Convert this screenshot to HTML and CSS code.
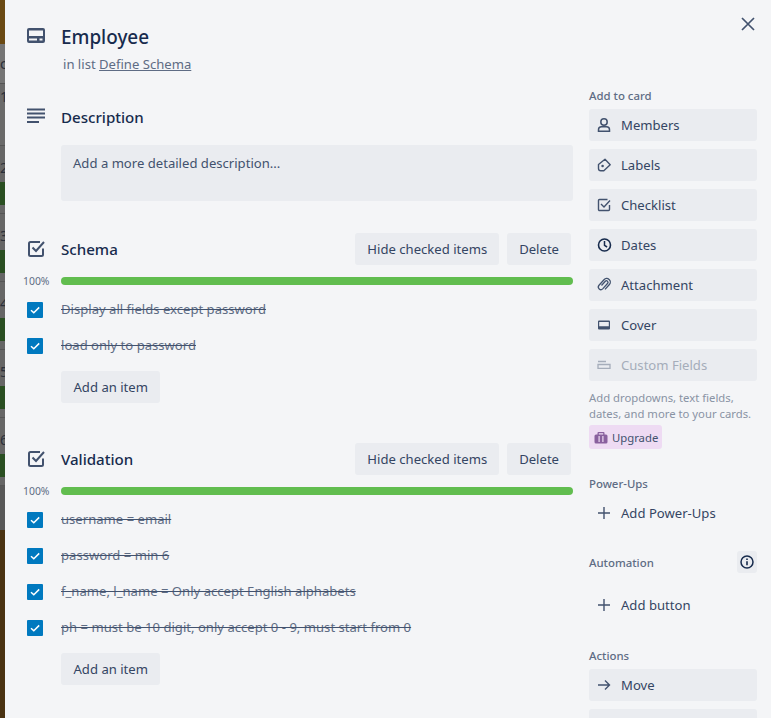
FILE: index.html
```html
<!DOCTYPE html>
<html lang="en">
<head>
  <meta charset="UTF-8">
  <title>Employee</title>
  <link rel="stylesheet" href="styles.css">
</head>
<body>
  <div class="board-strip">
    <div class="strip-top"></div>
    <div class="strip-card s1"><span>c</span></div>
    <div class="strip-card s2"><span>1</span></div>
    <div class="strip-card s3"><span>2</span><i></i></div>
    <div class="strip-card s3"><span>3</span><i></i></div>
    <div class="strip-card s3"><span>4</span><i></i></div>
    <div class="strip-card s3"><span>5</span><i></i></div>
    <div class="strip-card s3"><span>6</span><i></i></div>
    <div class="strip-end"></div>
  </div>

  <div class="modal">
    <svg class="close" width="16" height="16" viewBox="0 0 16 16"><path d="M2 2l12 12M14 2L2 14" fill="none" stroke="#42526e" stroke-width="1.7"/></svg>

    <header class="card-head">
      <svg class="head-icon" width="20" height="20" viewBox="0 0 20 20"><path fill-rule="evenodd" d="M2 1h14a2 2 0 0 1 2 2v11a2 2 0 0 1-2 2H2a2 2 0 0 1-2-2V3a2 2 0 0 1 2-2zm0 2.500V9h14V3.500H2zM2 11.500v2h8v-2H2zm10.500 0v2h3v-2h-3z" fill="#42526e"/></svg>
      <div>
        <h1>Employee</h1>
        <p class="in-list">in list <a href="#">Define Schema</a></p>
      </div>
    </header>

    <div class="columns">
      <main class="main-col">
        <section class="description">
          <div class="section-head">
            <svg class="head-icon" width="20" height="20" viewBox="0 0 20 20"><path d="M0 2.500h18M0 6.500h18M0 10.500h18M0 15h12" stroke="#42526e" stroke-width="1.800" fill="none"/></svg>
            <h2>Description</h2>
          </div>
          <div class="desc-box">Add a more detailed description...</div>
        </section>

        <section class="checklist">
          <div class="section-head">
            <svg class="head-icon" width="20" height="20" viewBox="0 0 20 20"><path d="M16 9.500v6a1.500 1.500 0 0 1-1.500 1.500h-11A1.500 1.500 0 0 1 2 15.500v-11A1.500 1.500 0 0 1 3.500 3H13" fill="none" stroke="#42526e" stroke-width="2"/><path d="M5.500 8.500L9 12l8-9" fill="none" stroke="#42526e" stroke-width="2"/></svg>
            <h2>Schema</h2>
            <div class="head-btns">
              <button class="btn">Hide checked items</button>
              <button class="btn">Delete</button>
            </div>
          </div>
          <div class="progress"><span>100%</span><div class="bar"></div></div>
          <div class="item"><span class="tick"><svg width="16" height="16" viewBox="0 0 16 16"><path d="M4 8.200l2.800 2.600L12.200 5.400" fill="none" stroke="#fff" stroke-width="1.500"/></svg></span><s>Display all fields except password</s></div>
          <div class="item"><span class="tick"><svg width="16" height="16" viewBox="0 0 16 16"><path d="M4 8.200l2.800 2.600L12.200 5.400" fill="none" stroke="#fff" stroke-width="1.500"/></svg></span><s>load only to password</s></div>
          <button class="btn add-item">Add an item</button>
        </section>

        <section class="checklist">
          <div class="section-head">
            <svg class="head-icon" width="20" height="20" viewBox="0 0 20 20"><path d="M16 9.500v6a1.500 1.500 0 0 1-1.500 1.500h-11A1.500 1.500 0 0 1 2 15.500v-11A1.500 1.500 0 0 1 3.500 3H13" fill="none" stroke="#42526e" stroke-width="2"/><path d="M5.500 8.500L9 12l8-9" fill="none" stroke="#42526e" stroke-width="2"/></svg>
            <h2>Validation</h2>
            <div class="head-btns">
              <button class="btn">Hide checked items</button>
              <button class="btn">Delete</button>
            </div>
          </div>
          <div class="progress"><span>100%</span><div class="bar"></div></div>
          <div class="item"><span class="tick"><svg width="16" height="16" viewBox="0 0 16 16"><path d="M4 8.200l2.800 2.600L12.200 5.400" fill="none" stroke="#fff" stroke-width="1.500"/></svg></span><s>username = email</s></div>
          <div class="item"><span class="tick"><svg width="16" height="16" viewBox="0 0 16 16"><path d="M4 8.200l2.800 2.600L12.200 5.400" fill="none" stroke="#fff" stroke-width="1.500"/></svg></span><s>password = min 6</s></div>
          <div class="item"><span class="tick"><svg width="16" height="16" viewBox="0 0 16 16"><path d="M4 8.200l2.800 2.600L12.200 5.400" fill="none" stroke="#fff" stroke-width="1.500"/></svg></span><s>f_name, l_name = Only accept English alphabets</s></div>
          <div class="item"><span class="tick"><svg width="16" height="16" viewBox="0 0 16 16"><path d="M4 8.200l2.800 2.600L12.200 5.400" fill="none" stroke="#fff" stroke-width="1.500"/></svg></span><s>ph = must be 10 digit, only accept 0 - 9, must start from 0</s></div>
          <button class="btn add-item">Add an item</button>
        </section>
      </main>

      <aside class="side-col">
        <h3>Add to card</h3>
        <a class="side-btn"><svg width="16" height="16" viewBox="0 0 16 16"><circle cx="8" cy="5" r="3.200" fill="none" stroke="#42526e" stroke-width="1.500"/><path d="M2.500 14.200v-1.500a3 3 0 0 1 3-3h5a3 3 0 0 1 3 3v1.500z" fill="none" stroke="#42526e" stroke-width="1.500"/></svg>Members</a>
        <a class="side-btn"><svg width="16" height="16" viewBox="0 0 16 16"><path d="M9 2.200l5.200 5.600-6.400 6H4.800A2.300 2.300 0 0 1 2.500 11.500V7.500z" fill="none" stroke="#42526e" stroke-width="1.400" stroke-linejoin="round"/><circle cx="6.600" cy="9" r="1.300" fill="#42526e"/></svg>Labels</a>
        <a class="side-btn"><svg width="16" height="16" viewBox="0 0 16 16"><path d="M13.500 8v4.500a1 1 0 0 1-1 1h-9a1 1 0 0 1-1-1v-9a1 1 0 0 1 1-1h8" fill="none" stroke="#42526e" stroke-width="1.400"/><path d="M5 7l3 3 6-6.500" fill="none" stroke="#42526e" stroke-width="1.400"/></svg>Checklist</a>
        <a class="side-btn"><svg width="16" height="16" viewBox="0 0 16 16"><circle cx="8.500" cy="8" r="6" fill="none" stroke="#172b4d" stroke-width="1.600"/><path d="M8.500 4v4.300l2.600 1.700" fill="none" stroke="#172b4d" stroke-width="1.500"/></svg>Dates</a>
        <a class="side-btn"><svg width="16" height="16" viewBox="0 0 16 16"><path d="M5.500 8.500l3.800-4.300a1.600 1.600 0 0 1 2.400 2.100l-5 5.600a2.600 2.600 0 0 1-3.900-3.400l5.200-5.800a3.600 3.600 0 0 1 5.400 4.800l-4.400 4.900" fill="none" stroke="#42526e" stroke-width="1.300"/></svg>Attachment</a>
        <a class="side-btn"><svg width="16" height="16" viewBox="0 0 16 16"><path fill-rule="evenodd" d="M3 3.500h10a1 1 0 0 1 1 1v7a1 1 0 0 1-1 1H3a1 1 0 0 1-1-1v-7a1 1 0 0 1 1-1zm.200 1.400v4.300h9.600V4.900H3.200z" fill="#42526e"/></svg>Cover</a>
        <a class="side-btn disabled"><svg width="16" height="16" viewBox="0 0 16 16"><path d="M2 4.500h8M2 7.500h12v3.800H2z" fill="none" stroke="#a5adba" stroke-width="1.300"/></svg>Custom Fields</a>
        <p class="upsell">Add dropdowns, text fields, dates, and more to your cards.</p>
        <a class="upgrade"><svg width="14" height="14" viewBox="0 0 14 14"><path fill-rule="evenodd" d="M4.500 1h5a1 1 0 0 1 1 1v1.500H12a1.500 1.500 0 0 1 1.500 1.500v6A1.500 1.500 0 0 1 12 12.500H2A1.500 1.500 0 0 1 .5 11V5A1.500 1.500 0 0 1 2 3.500h1.500V2a1 1 0 0 1 1-1zm.3 1.200v1.300h4.400V2.200H4.800zM4.500 5v6h1.200V5H4.500zm3.800 0v6h1.200V5H8.300z" fill="#89609e"/></svg>Upgrade</a>

        <h3 class="powerups">Power-Ups</h3>
        <a class="side-btn plain"><svg width="16" height="16" viewBox="0 0 16 16"><path d="M8 2v12M2 8h12" stroke="#42526e" stroke-width="1.400"/></svg>Add Power-Ups</a>

        <div class="auto-head">
          <h3>Automation</h3>
          <span class="info"><svg width="16" height="16" viewBox="0 0 16 16"><circle cx="8" cy="8" r="6" fill="none" stroke="#172b4d" stroke-width="1.500"/><path d="M8 7.200v4M8 4.500v1.500" stroke="#172b4d" stroke-width="1.600"/></svg></span>
        </div>
        <a class="side-btn plain"><svg width="16" height="16" viewBox="0 0 16 16"><path d="M8 2v12M2 8h12" stroke="#42526e" stroke-width="1.400"/></svg>Add button</a>

        <h3 class="actions">Actions</h3>
        <a class="side-btn"><svg width="16" height="16" viewBox="0 0 16 16"><path d="M2 8h11.500M9 3.500L13.500 8 9 12.500" fill="none" stroke="#42526e" stroke-width="1.400"/></svg>Move</a>
        <a class="side-btn"></a>
      </aside>
    </div>
  </div>
</body>
</html>
```
FILE: styles.css
```css
* {
  box-sizing: border-box;
}

body {
  margin: 0;
  height: 718px;
  overflow: hidden;
  display: flex;
  font-family: "Noto Sans", "Open Sans", sans-serif;
  font-size: 13.1px;
  line-height: 20px;
  color: #172b4d;
  background-color: #4a3312;
}

/* piece of the board showing behind the card */
.board-strip {
  width: 5px;
  flex: none;
  overflow: hidden;
  font-size: 14px;
  color: #2a2f3a;
}

.strip-top {
  height: 44px;
  background-color: #6b4a14;
}

.strip-card {
  border-bottom: 1px solid #555;
  overflow: hidden;
}

.strip-card i {
  display: block;
  height: 23px;
  background-color: #2a4f22;
}

.s1 {
  height: 40px;
  padding-top: 10px;
  background-color: #757575;
}

.s2 {
  height: 62px;
  padding-top: 3px;
  background-color: #6a6a6a;
}

.s3 {
  height: 68px;
  background-color: #666;
}

.s3 span {
  display: block;
  height: 36px;
  padding-top: 12px;
}

.strip-end {
  height: 44px;
  background-color: #585858;
}

.modal {
  position: relative;
  flex: 1;
  min-width: 0;
  background-color: #f4f5f7;
  padding-top: 24px;
}

.close {
  position: absolute;
  top: 16px;
  right: 15px;
}

.head-icon {
  flex: none;
  margin-left: 22px;
  margin-right: 14px;
}

.card-head {
  display: flex;
}

.card-head .head-icon {
  margin-top: 3px;
}

h1 {
  margin: 0;
  font-size: 18.9px;
  line-height: 26px;
  font-weight: 500;
  color: #172b4d;
}

.in-list {
  margin: 4px 0 0 2px;
  color: #5e6c84;
}

.in-list a {
  color: #5e6c84;
}

.columns {
  display: flex;
  margin-top: 12px;
}

.main-col {
  width: 568px;
  flex: none;
  padding-top: 15px;
}

.section-head {
  display: flex;
  align-items: center;
  min-height: 32px;
}

h2 {
  margin: 0;
  font-size: 15.1px;
  line-height: 20px;
  font-weight: 500;
  color: #172b4d;
}

.desc-box {
  margin: 12px 0 0 56px;
  height: 56px;
  padding: 8px 12px;
  background-color: #eaecf0;
  border-radius: 3px;
  color: #42526e;
}

.checklist {
  margin-top: 32px;
}

.checklist + .checklist {
  margin-top: 40px;
}

.head-btns {
  margin-left: auto;
  margin-right: 2px;
  display: flex;
  gap: 8px;
}

.btn {
  height: 32px;
  padding: 0 12px;
  border: 0;
  border-radius: 3px;
  background-color: #eaecf0;
  font: inherit;
  color: #344563;
}

.progress {
  position: relative;
  margin-top: 6px;
  height: 20px;
  display: flex;
  align-items: center;
  padding-left: 56px;
}

.progress span {
  position: absolute;
  left: 18px;
  font-size: 10.4px;
  color: #5e6c84;
}

.bar {
  flex: 1;
  height: 8px;
  border-radius: 4px;
  background-color: #61bd4f;
}

.item {
  display: flex;
  align-items: center;
  height: 36px;
  padding-left: 22px;
  color: #5e6c84;
}

.tick {
  flex: none;
  width: 16px;
  height: 16px;
  margin-top: 2px;
  margin-right: 18px;
  border-radius: 1px;
  background-color: #0079bf;
  display: flex;
}

.item s {
  text-decoration-color: #42526e;
}

.add-item {
  display: block;
  margin: 8px 0 0 56px;
  padding: 0 12.5px;
}

.side-col {
  width: 168px;
  flex: none;
  margin-left: 16px;
}

h3 {
  margin: 0;
  font-size: 11.4px;
  line-height: 20px;
  font-weight: 500;
  color: #5e6c84;
}

.side-btn {
  display: flex;
  align-items: center;
  gap: 9px;
  height: 32px;
  margin-top: 8px;
  padding-left: 7px;
  border-radius: 3px;
  background-color: #eaecf0;
  color: #344563;
}

h3 + .side-btn {
  margin-top: 3px;
}

.side-btn svg {
  flex: none;
}

.side-btn.plain {
  background: none;
}

.side-btn.disabled {
  color: #a5adba;
}

.upsell {
  margin: 9px 0 0;
  font-size: 11.3px;
  line-height: 16px;
  color: #8993a4;
}

.upgrade {
  display: flex;
  align-items: center;
  gap: 4px;
  width: 73px;
  height: 24px;
  margin-top: 3px;
  padding-top: 2px;
  padding-left: 5px;
  border-radius: 3px;
  background-color: #eedbf3;
  font-size: 11.3px;
  color: #42526e;
}

.powerups {
  margin-top: 25px;
}

.auto-head {
  display: flex;
  justify-content: space-between;
  align-items: center;
  margin-top: 22px;
}

.auto-head h3 {
  align-self: flex-end;
}

.info {
  width: 20px;
  height: 22px;
  border-radius: 3px;
  background-color: #eaecf0;
  display: flex;
  align-items: center;
  justify-content: center;
}

.auto-head + .side-btn {
  margin-top: 16px;
}

.actions {
  margin-top: 25px;
}
```
